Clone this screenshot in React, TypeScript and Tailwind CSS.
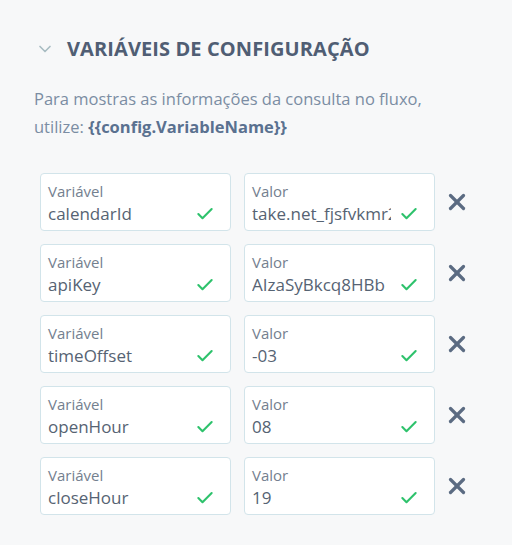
import { Check, ChevronDown, X } from "lucide-react";

const rows = [
    { name: "calendarId", value: "take.net_fjsfvkmr2" },
    { name: "apiKey", value: "AIzaSyBkcq8HBb" },
    { name: "timeOffset", value: "-03" },
    { name: "openHour", value: "08" },
    { name: "closeHour", value: "19" },
];

const Field = ({ label, value }: { label: string; value: string }) => (
    <div className="w-[191px] h-[58px] bg-white border border-[#d2e4ea] rounded-[4px] pl-[7px] pr-[15px] pt-[7px] flex flex-col">
        <span className="text-[15px] leading-[20px] text-[#74808f]">{label}</span>
        <div className="flex items-center gap-[8px] mt-[1px]">
            <span className="flex-1 overflow-hidden whitespace-nowrap text-[17px] leading-[24px] text-[#566373]">
                {value}
            </span>
            <Check className="w-[20px] h-[20px] text-[#2ec26c] shrink-0" strokeWidth={2.5} />
        </div>
    </div>
);

export default function App() {
    return (
        <div className="w-[512px] h-[545px] bg-[#f7f8f9] pt-[36px] pl-[34px]" style={{ fontFamily: "'Open Sans', 'Liberation Sans', sans-serif" }}>
            <div className="flex items-center gap-[12px]">
                <ChevronDown className="w-[20px] h-[20px] text-[#a8bcc2] ml-[1px]" strokeWidth={2} />
                <h2 className="text-[20px] leading-[26px] font-bold text-[#505e74] tracking-[0.1px]">VARIÁVEIS DE CONFIGURAÇÃO</h2>
            </div>
            <p className="mt-[23px] text-[16.5px] leading-[28px] text-[#7b8da3]">
                Para mostras as informações da consulta no fluxo,
                <br />
                utilize: <span className="font-bold text-[#5a7190]">{"{{config.VariableName}}"}</span>
            </p>
            <div className="mt-[32px] ml-[6px] flex flex-col gap-[13px]">
                {rows.map((r) => (
                    <div key={r.name} className="flex items-center gap-[13px]">
                        <Field label="Variável" value={r.name} />
                        <Field label="Valor" value={r.value} />
                        <X className="w-[26px] h-[26px] text-[#5b6b82] -ml-[4px]" strokeWidth={3} />
                    </div>
                ))}
            </div>
        </div>
    );
}
